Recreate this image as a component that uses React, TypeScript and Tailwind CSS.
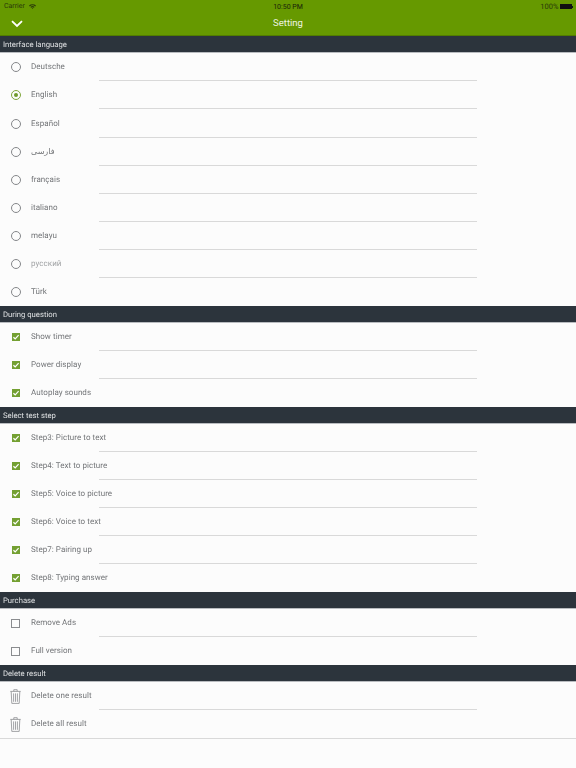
import type { ReactNode } from 'react';

type Mark = 'radio' | 'radio-on' | 'check' | 'box' | 'trash';

const RadioIcon = ({ on }: { on: boolean }) => (
  <span className={`box-content flex h-[8px] w-[8px] items-center justify-center rounded-full border ${on ? 'border-[#7fa63c]' : 'border-[#85878a]'}`}>
    {on && <span className="h-[4px] w-[4px] rounded-full bg-[#6f9a2c]" />}
  </span>
);

const TrashIcon = () => (
  <svg width="11" height="15" viewBox="0 0 11 15" fill="none" stroke="#8b8d90" strokeWidth="0.8">
    <path d="M0.3 2.4h10.4M3.8 2.3V.7h3.4v1.6M1.2 2.6l.6 11.8h7.4l.6-11.8M3.6 4.4v8.4M5.5 4.4v8.4M7.4 4.4v8.4" />
  </svg>
);

const MarkIcon = ({ mark }: { mark: Mark }) => {
  if (mark === 'radio') return <RadioIcon on={false} />;
  if (mark === 'radio-on') return <RadioIcon on />;
  if (mark === 'trash') return <TrashIcon />;
  if (mark === 'check')
    return (
      <span className="flex h-[8px] w-[8px] items-center justify-center bg-[#74a032]">
        <svg width="8" height="8" viewBox="0 0 8 8" fill="none" stroke="#fff" strokeWidth="1.2">
          <path d="M1.4 4.2 3.2 5.8 6.6 2.2" />
        </svg>
      </span>
    );
  return <span className="box-content h-[7px] w-[7px] border border-[#8a8c8f]" />;
};

const Row = ({ mark, label, last }: { mark: Mark; label: string; last?: boolean }) => (
  <div className="relative flex h-[28.05px] items-center">
    <div className="flex w-[31px] shrink-0 justify-center">
      <MarkIcon mark={mark} />
    </div>
    <span className={`text-[8px] tracking-[0.05px] [will-change:transform] ${label === 'русский' ? 'text-[#a2a4a6]' : 'text-[#737578]'}`}>{label}</span>
    {!last && <div className="absolute bottom-0 left-[99px] h-px w-[378px] bg-[#d9d9d9]" />}
  </div>
);

const Section = ({ title, children }: { title: string; children: ReactNode }) => (
  <section>
    <div className="flex h-[17px] items-center border-b border-[#b9bcc0] bg-[#2c343c] pl-[3px] pt-[1px] text-[7.7px] text-[#dfe1e3]">
      <span className="[will-change:transform]">{title}</span>
    </div>
    {children}
  </section>
);

const rows = (mark: Mark, labels: string[]) =>
  labels.map((l, i) => <Row key={l} mark={mark} label={l} last={i === labels.length - 1} />);

export default function App() {
  return (
    <div className="h-[768px] w-[576px] overflow-hidden bg-[#fcfcfc] font-['Roboto','DejaVu_Sans',sans-serif] [text-rendering:geometricPrecision]">
      <header className="relative h-[36.4px] border-b border-[#527d00] bg-[#669900]">
        <div className="flex h-[13px] items-center justify-between pl-[4px] pr-[3.5px] text-[7px] text-[#2a3a0a]">
          <span className="flex items-center gap-[4px]">
            Carrier
            <svg width="7" height="5" viewBox="0 0 7 5" className="-mt-[1px]" fill="#2a3a0a">
              <path d="M0 1.6A5 5 0 0 1 7 1.6L6.2 2.4A4 4 0 0 0 .8 2.4ZM1.4 3A3 3 0 0 1 5.6 3L4.8 3.8A2 2 0 0 0 2.2 3.8ZM2.8 4.3A1 1 0 0 1 4.2 4.3L3.5 5Z" />
            </svg>
          </span>
          <span className="absolute left-0 right-0 top-[2px] text-center text-[7px] text-[#16200a]">10:50 PM</span>
          <span className="flex items-center gap-[1px] text-[7.5px]">
            100%
            <span className="flex items-center">
              <span className="h-[5px] w-[12px] bg-[#111]" />
              <span className="h-[2px] w-px bg-[#111]" />
            </span>
          </span>
        </div>
        <div className="relative flex h-[22px] items-center justify-center pt-[1px] text-[9.5px] text-[#eef4e2]">
          <svg className="absolute left-[11px] top-[7px]" width="12" height="8" viewBox="0 0 12 8" fill="none" stroke="#fff" strokeWidth="1.8">
            <path d="M1 1.2 6 6 11 1.2" />
          </svg>
          Setting
        </div>
      </header>
      <Section title="Interface language">
        <Row mark="radio" label="Deutsche" />
        <Row mark="radio-on" label="English" />
        <Row mark="radio" label="Español" />
        <Row mark="radio" label="فارسی" />
        <Row mark="radio" label="français" />
        <Row mark="radio" label="italiano" />
        <Row mark="radio" label="melayu" />
        <Row mark="radio" label="русский" />
        <Row mark="radio" label="Türk" last />
      </Section>
      <Section title="During question">
        {rows('check', ['Show timer', 'Power display', 'Autoplay sounds'])}
      </Section>
      <Section title="Select test step">
        {rows('check', ['Step3: Picture to text', 'Step4: Text to picture', 'Step5: Voice to picture', 'Step6: Voice to text', 'Step7: Pairing up', 'Step8: Typing answer'])}
      </Section>
      <Section title="Purchase">
        {rows('box', ['Remove Ads', 'Full version'])}
      </Section>
      <Section title="Delete result">
        {rows('trash', ['Delete one result', 'Delete all result'])}
        <div className="h-px bg-[#d9d9d9]" />
      </Section>
    </div>
  );
}
